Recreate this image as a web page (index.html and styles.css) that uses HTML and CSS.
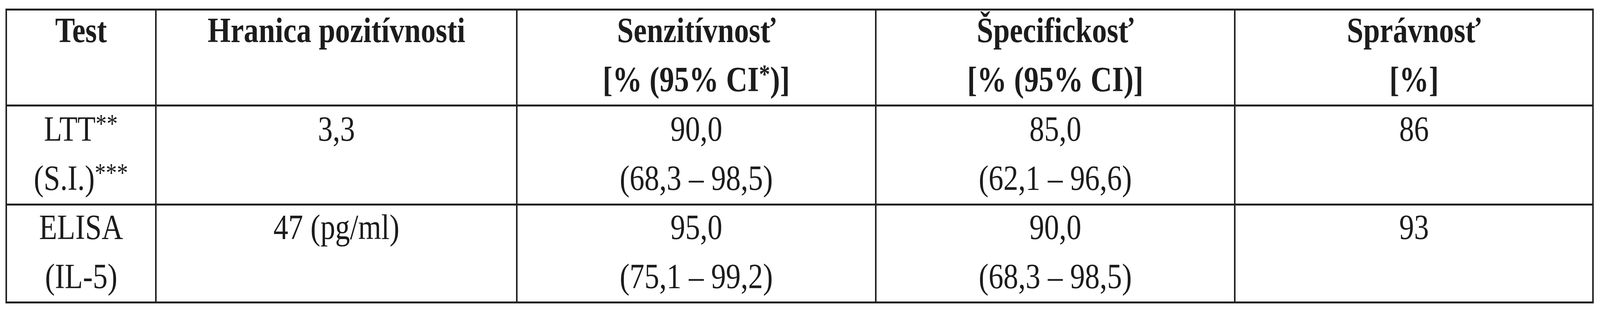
FILE: index.html
```html
<!DOCTYPE html>
<html lang="sk">
<head>
<meta charset="utf-8">
<title>Tabuľka</title>
<link rel="stylesheet" href="styles.css">
</head>
<body>
<div class="tbl">
  <div class="c h"><div class="ln">Test</div></div>
  <div class="c h"><div class="ln">Hranica pozitívnosti</div></div>
  <div class="c h"><div class="ln">Senzitívnosť</div><div class="ln">[% (95% CI<span class="sup">*</span>)]</div></div>
  <div class="c h"><div class="ln">Špecifickosť</div><div class="ln">[% (95% CI)]</div></div>
  <div class="c h"><div class="ln">Správnosť</div><div class="ln">[%]</div></div>

  <div class="c b r1"><div class="ln">LTT<span class="sup">**</span></div><div class="ln">(S.I.)<span class="sup">***</span></div></div>
  <div class="c b r1"><div class="ln">3,3</div></div>
  <div class="c b r1"><div class="ln">90,0</div><div class="ln">(68,3 – 98,5)</div></div>
  <div class="c b r1"><div class="ln">85,0</div><div class="ln">(62,1 – 96,6)</div></div>
  <div class="c b r1"><div class="ln">86</div></div>

  <div class="c b r2 tick"><div class="ln">ELISA</div><div class="ln">(IL-5)</div></div>
  <div class="c b r2 tick"><div class="ln">47 (pg/ml)</div></div>
  <div class="c b r2 tick"><div class="ln">95,0</div><div class="ln">(75,1 – 99,2)</div></div>
  <div class="c b r2 tick"><div class="ln">90,0</div><div class="ln">(68,3 – 98,5)</div></div>
  <div class="c b r2"><div class="ln">93</div></div>
</div>
</body>
</html>
```
FILE: styles.css
```css
html, body {
  margin: 0;
  padding: 0;
  background: #ffffff;
}

body {
  padding-top: 22px;
  font-family: "Liberation Serif", "Times New Roman", serif;
  font-size: 90px;
  color: #1c1c1c;
}

.tbl {
  display: grid;
  grid-template-columns: 383px 924px 919px 919px 917px;
  grid-template-rows: 246px 254px 251px;
  width: 4066px;
  box-sizing: border-box;
  margin-left: 14px;
  border-top: 5px solid #222222;
  border-left: 4px solid #222222;
}

.c {
  position: relative;
  box-sizing: border-box;
  border-right: 4px solid #222222;
  border-bottom: 5px solid #222222;
  display: flex;
  flex-direction: column;
  align-items: center;
  gap: 26px;
}

.ln {
  line-height: 100px;
  white-space: nowrap;
  transform: scaleX(0.843);
  transform-origin: center;
}

.h {
  font-weight: bold;
  padding-top: 1px;
}

.r1 {
  padding-top: 8px;
}

.r2 {
  padding-top: 6px;
}

.sup {
  font-size: 0.75em;
  line-height: 0;
  vertical-align: 0.33em;
}

.tick::after {
  content: "";
  position: absolute;
  right: -4px;
  bottom: -10px;
  width: 4px;
  height: 5px;
  background: #222222;
}
```
